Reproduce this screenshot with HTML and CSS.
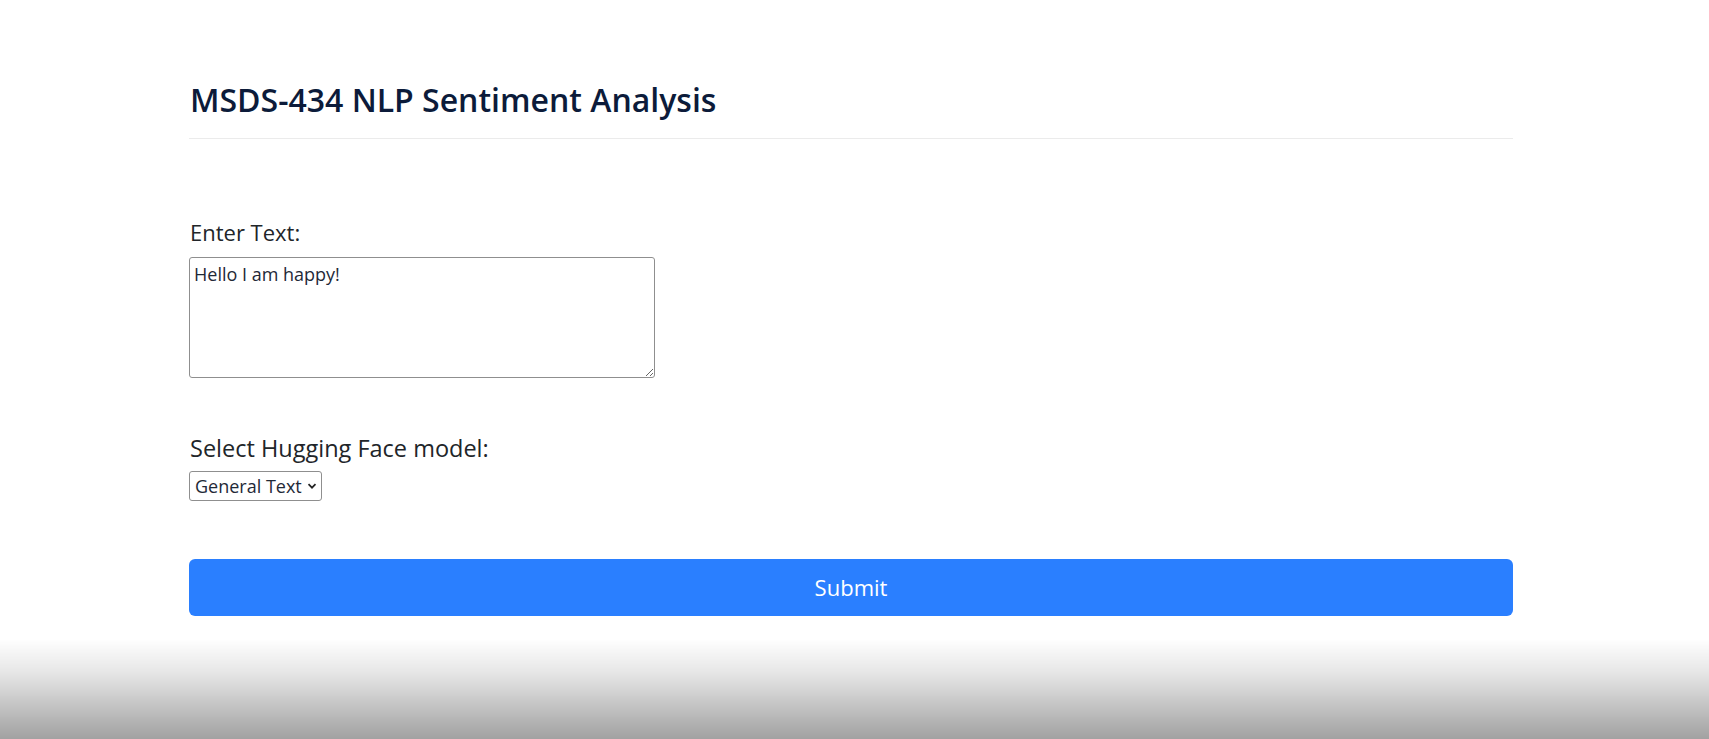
FILE: index.html
```html
<!DOCTYPE html>
<html lang="en">
<head>
<meta charset="utf-8">
<title>MSDS-434 NLP Sentiment Analysis</title>
<link rel="stylesheet" href="styles.css">
</head>
<body>
<main class="page">
  <header class="page-header">
    <h1 class="title">MSDS-434 NLP Sentiment Analysis</h1>
  </header>
  <form class="form">
    <div class="field field-text">
      <label class="label" for="text">Enter Text:</label>
      <textarea id="text" class="textarea">Hello I am happy!</textarea>
    </div>
    <div class="field field-model">
      <label class="label label-model" for="model">Select Hugging Face model:</label>
      <div class="select">
        <span class="select-value">General Text</span>
        <svg class="select-chevron" viewBox="0 0 10 10" width="10" height="10"><path d="M1.5 3.2 L5 6.7 L8.5 3.2" fill="none" stroke="#222" stroke-width="1.7"/></svg>
      </div>
    </div>
    <button type="button" class="submit">Submit</button>
  </form>
</main>
<div class="bottom-shade"></div>
</body>
</html>
```
FILE: styles.css
```css
html, body {
  margin: 0;
  padding: 0;
  background: #ffffff;
}
body {
  font-family: "Open Sans", "Noto Sans", sans-serif;
  color: #212529;
  height: 739px;
  overflow: hidden;
}
.page {
  width: 1324px;
  margin-left: 189px;
  padding-top: 81px;
}
.page-header {
  border-bottom: 1px solid #ebebeb;
  padding-bottom: 19px;
}
.title {
  margin: 0;
  font-size: 32px;
  font-weight: 600;
  line-height: 1.2;
  color: #0c1b3a;
  padding-left: 1px;
}
.form {
  display: flex;
  flex-direction: column;
  padding-top: 79px;
}
.field {
  display: flex;
  flex-direction: column;
  align-items: flex-start;
}
.label {
  font-size: 22px;
  line-height: 1.3;
  margin-bottom: 10px;
  padding-left: 1px;
}
.label-model {
  font-size: 23.5px;
  margin-bottom: 7px;
}
.textarea {
  width: 466px;
  height: 121px;
  box-sizing: border-box;
  border: 1px solid #8f8f8f;
  border-radius: 3px;
  padding: 4px 4px;
  font-family: "Open Sans", "Noto Sans", sans-serif;
  font-size: 18px;
  color: #1f2937;
  resize: both;
}
.field-model {
  margin-top: 55px;
}
.select {
  display: flex;
  align-items: center;
  gap: 5px;
  height: 30px;
  box-sizing: border-box;
  border: 1px solid #8f8f8f;
  border-radius: 3px;
  padding: 0 4px 0 5px;
  font-size: 18px;
  color: #1f2937;
}
.submit {
  margin-top: 58px;
  height: 57px;
  width: 100%;
  border: none;
  border-radius: 6px;
  background: #2a7fff;
  color: #ffffff;
  font-family: "Open Sans", "Noto Sans", sans-serif;
  font-size: 22px;
}
.bottom-shade {
  position: fixed;
  left: 0;
  right: 0;
  bottom: 0;
  height: 100px;
  background: linear-gradient(to bottom, rgba(0,0,0,0) 0%, rgba(0,0,0,0.1) 35%, rgba(0,0,0,0.37) 100%);
  pointer-events: none;
}
```
